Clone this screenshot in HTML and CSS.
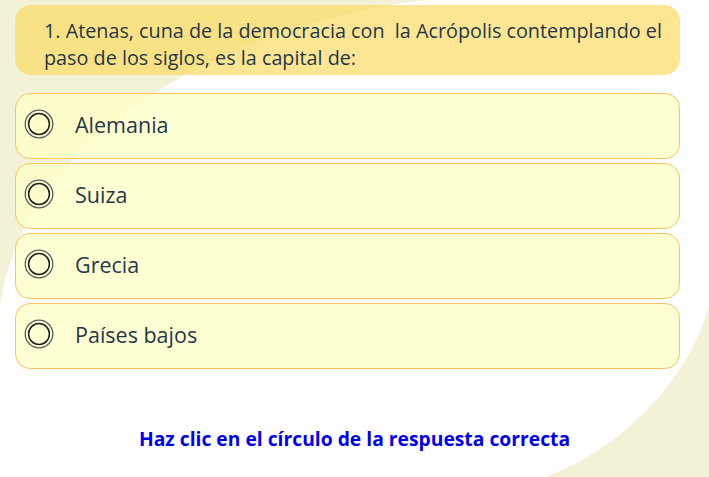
FILE: index.html
```html
<!DOCTYPE html>
<html lang="es">
<head>
<meta charset="UTF-8">
<meta name="viewport" content="width=device-width, initial-scale=1.0">
<title>Pregunta 1</title>
<link rel="stylesheet" href="styles.css">
</head>
<body>

<div class="page">
  <!-- decorative background blobs -->
  <svg class="backdrop" viewBox="0 0 709 477" preserveAspectRatio="none">
    <path d="M0,0 L430,0 C300,10 30,100 0,305 Z" fill="#f3f2d7"/>
    <path d="M709,305 C690,380 620,450 545,477 L709,477 Z" fill="#f3f2d7"/>
  </svg>

  <div class="quiz">
    <div class="question">
      1. Atenas, cuna de la democracia con&nbsp; la Acrópolis contemplando el paso de los siglos, es la capital de:
    </div>

    <div class="options">
      <label class="option">
        <svg class="ring" viewBox="0 0 30 30"><circle cx="15" cy="15" r="13.8" fill="none" stroke="#56605f" stroke-width="1.3"/><circle cx="15" cy="15" r="10.4" fill="none" stroke="#1b2222" stroke-width="1.5"/></svg>
        <span>Alemania</span>
      </label>
      <label class="option">
        <svg class="ring" viewBox="0 0 30 30"><circle cx="15" cy="15" r="13.8" fill="none" stroke="#56605f" stroke-width="1.3"/><circle cx="15" cy="15" r="10.4" fill="none" stroke="#1b2222" stroke-width="1.5"/></svg>
        <span>Suiza</span>
      </label>
      <label class="option">
        <svg class="ring" viewBox="0 0 30 30"><circle cx="15" cy="15" r="13.8" fill="none" stroke="#56605f" stroke-width="1.3"/><circle cx="15" cy="15" r="10.4" fill="none" stroke="#1b2222" stroke-width="1.5"/></svg>
        <span>Grecia</span>
      </label>
      <label class="option">
        <svg class="ring" viewBox="0 0 30 30"><circle cx="15" cy="15" r="13.8" fill="none" stroke="#56605f" stroke-width="1.3"/><circle cx="15" cy="15" r="10.4" fill="none" stroke="#1b2222" stroke-width="1.5"/></svg>
        <span>Países bajos</span>
      </label>
    </div>

    <p class="hint">Haz clic en el círculo de la respuesta correcta</p>
  </div>
</div>

</body>
</html>
```

FILE: styles.css
```css
/* page base */
body {
  margin: 0;
  background-color: #fff;
  font-family: "Open Sans", "Noto Sans", sans-serif;
  color: #253746;
}

.page {
  position: relative;
  width: 709px;
  height: 477px;
  overflow: hidden;
}

/* cream shapes behind everything */
.backdrop {
  position: absolute;
  top: 0;
  left: 0;
  width: 709px;
  height: 477px;
}

.quiz {
  position: relative;
  padding: 5px 29px 0 15px;
}

/* question banner */
.question {
  background-color: rgba(252, 218, 96, 0.68);
  border-radius: 16px;
  height: 70px;
  box-sizing: border-box;
  padding: 12px 6px 0 29px;
  font-size: 19.8px;
  font-weight: 500;
  line-height: 27px;
}

/* answers */
.options {
  display: flex;
  flex-direction: column;
  gap: 4px;
  margin-top: 18px;
}

.option {
  display: flex;
  align-items: center;
  height: 66px;
  box-sizing: border-box;
  padding: 0 0 4px 8px;
  background-color: rgba(255, 255, 200, 0.78);
  border: 1.5px solid #fcc35c;
  border-radius: 15px;
  font-size: 21.5px;
  font-weight: 500;
  cursor: pointer;
}

.ring {
  width: 30px;
  height: 30px;
  margin-right: 21px;
}

.hint {
  margin: 56px 0 0 0;
  padding-left: 14px;
  text-align: center;
  font-weight: bold;
  font-size: 19.3px;
  color: #0000ee;
}
```
